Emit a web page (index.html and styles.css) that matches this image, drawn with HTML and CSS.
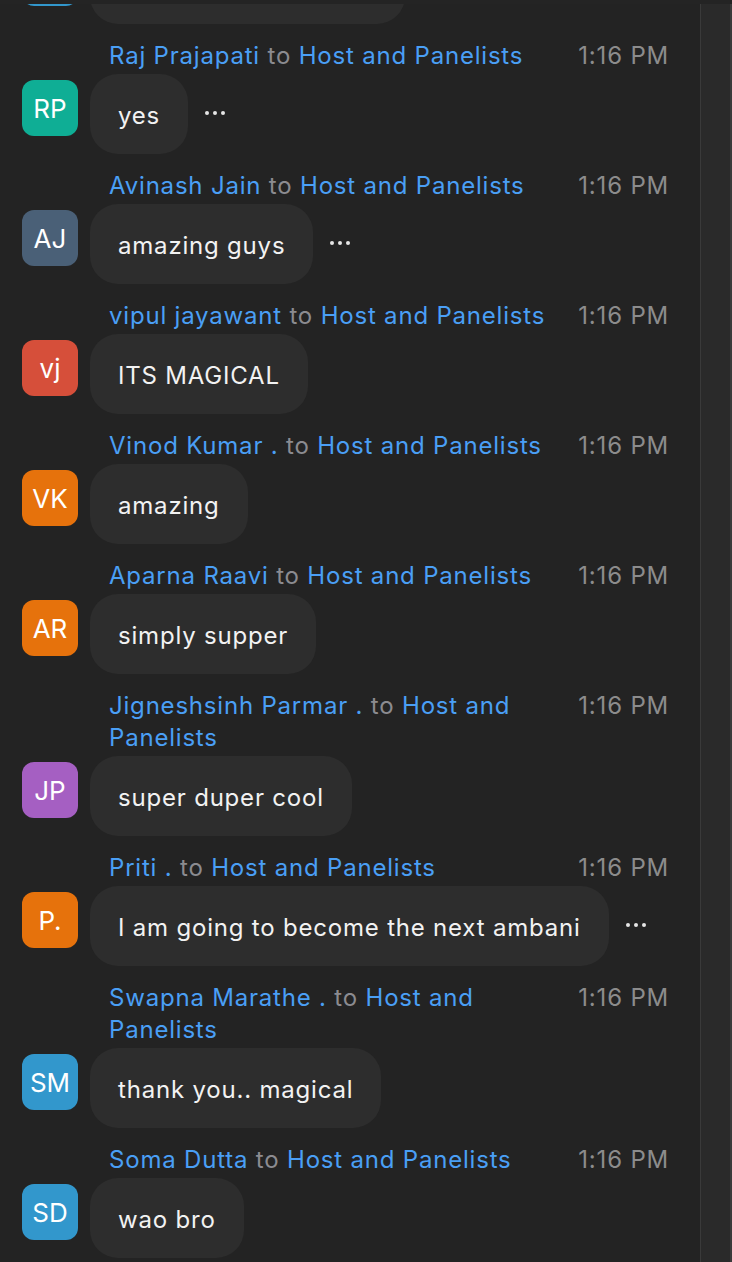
FILE: index.html
```html
<!DOCTYPE html>
<html>
<head>
<meta charset="utf-8">
<link rel="stylesheet" href="styles.css">
</head>
<body>
<div class="topbar"></div>
<div class="frame">
  <div class="viewport">
    <div class="list">
      <div class="msg partial">
        <div class="body"><div class="avatar c-blue"></div><div class="bubble stub"></div></div>
      </div>
      <div class="msg">
        <div class="head"><div class="who"><span class="name">Raj Prajapati</span> <span class="to">to</span> <span class="name">Host and Panelists</span></div><div class="time">1:16 PM</div></div>
        <div class="body"><div class="avatar c-teal">RP</div><div class="bubble">yes</div><div class="dots"><i></i><i></i><i></i></div></div>
      </div>
      <div class="msg">
        <div class="head"><div class="who"><span class="name">Avinash Jain</span> <span class="to">to</span> <span class="name">Host and Panelists</span></div><div class="time">1:16 PM</div></div>
        <div class="body"><div class="avatar c-slate">AJ</div><div class="bubble">amazing guys</div><div class="dots"><i></i><i></i><i></i></div></div>
      </div>
      <div class="msg">
        <div class="head"><div class="who"><span class="name">vipul jayawant</span> <span class="to">to</span> <span class="name">Host and Panelists</span></div><div class="time">1:16 PM</div></div>
        <div class="body"><div class="avatar c-red">vj</div><div class="bubble">ITS MAGICAL</div></div>
      </div>
      <div class="msg">
        <div class="head"><div class="who"><span class="name">Vinod Kumar .</span> <span class="to">to</span> <span class="name">Host and Panelists</span></div><div class="time">1:16 PM</div></div>
        <div class="body"><div class="avatar c-orange">VK</div><div class="bubble">amazing</div></div>
      </div>
      <div class="msg">
        <div class="head"><div class="who"><span class="name">Aparna Raavi</span> <span class="to">to</span> <span class="name">Host and Panelists</span></div><div class="time">1:16 PM</div></div>
        <div class="body"><div class="avatar c-orange">AR</div><div class="bubble">simply supper</div></div>
      </div>
      <div class="msg">
        <div class="head"><div class="who"><span class="name">Jigneshsinh Parmar .</span> <span class="to">to</span> <span class="name">Host and Panelists</span></div><div class="time">1:16 PM</div></div>
        <div class="body"><div class="avatar c-purple">JP</div><div class="bubble">super duper cool</div></div>
      </div>
      <div class="msg">
        <div class="head"><div class="who"><span class="name">Priti .</span> <span class="to">to</span> <span class="name">Host and Panelists</span></div><div class="time">1:16 PM</div></div>
        <div class="body"><div class="avatar c-orange">P.</div><div class="bubble">I am going to become the next ambani</div><div class="dots"><i></i><i></i><i></i></div></div>
      </div>
      <div class="msg">
        <div class="head"><div class="who"><span class="name">Swapna Marathe .</span> <span class="to">to</span> <span class="name">Host and Panelists</span></div><div class="time">1:16 PM</div></div>
        <div class="body"><div class="avatar c-blue">SM</div><div class="bubble">thank you.. magical</div></div>
      </div>
      <div class="msg">
        <div class="head"><div class="who"><span class="name">Soma Dutta</span> <span class="to">to</span> <span class="name">Host and Panelists</span></div><div class="time">1:16 PM</div></div>
        <div class="body"><div class="avatar c-blue">SD</div><div class="bubble">wao bro</div></div>
      </div>
    </div>
  </div>
  <div class="scrollbar"></div>
</div>
</body>
</html>
```
FILE: styles.css
```css
html, body {
  margin: 0;
  padding: 0;
  height: 100%;
}
body {
  background: #232323;
  font-family: Inter, "Liberation Sans", sans-serif;
  letter-spacing: 0.8px;
  overflow: hidden;
  display: flex;
  flex-direction: column;
}
.topbar {
  height: 4px;
  flex-shrink: 0;
  background: #242424;
}
.frame {
  flex: 1;
  display: flex;
  min-height: 0;
}
.viewport {
  width: 700px;
  overflow: hidden;
}
.scrollbar {
  flex: 1;
  background: #2a2a2a;
  border-left: 1px solid #3a3a3a;
  border-right: 2px solid #3a3a3a;
}
.list {
  margin-top: -60px;
  display: flex;
  flex-direction: column;
}
.msg {
  display: flex;
  flex-direction: column;
  gap: 2px;
  padding-bottom: 15px;
}
.head {
  display: flex;
  gap: 20px;
  padding-top: 1px;
  padding-left: 109px;
  padding-right: 31px;
  font-size: 24px;
  line-height: 32px;
}
.who {
  flex: 1;
}
.name {
  color: #4a9ff5;
}
.to {
  color: #8b8b90;
}
.time {
  color: #8c8c8c;
  flex-shrink: 0;
}
.body {
  display: flex;
  align-items: flex-start;
  gap: 12px;
  padding-left: 22px;
}
.avatar {
  width: 56px;
  height: 56px;
  margin-top: 6px;
  border-radius: 12px;
  color: #ffffff;
  font-size: 26px;
  letter-spacing: 0;
  display: flex;
  align-items: center;
  justify-content: center;
  flex-shrink: 0;
}
.c-teal { background: #0fae95; }
.c-slate { background: #4a6077; }
.c-red { background: #d64f3a; }
.c-orange { background: #e6720c; }
.c-purple { background: #a55fc2; }
.c-blue { background: #3297cc; }
.bubble {
  box-sizing: border-box;
  height: 80px;
  padding: 2px 28px 0;
  border-radius: 28px;
  background: #2d2d2d;
  color: #f2f2f2;
  font-size: 24px;
  display: flex;
  align-items: center;
  white-space: nowrap;
}
.stub {
  width: 315px;
  padding: 0;
}
.dots {
  align-self: center;
  margin-left: 5px;
  display: flex;
  gap: 4px;
  margin-top: -2px;
}
.dots i {
  width: 4px;
  height: 4px;
  border-radius: 50%;
  background: #e6e6e6;
}
```
